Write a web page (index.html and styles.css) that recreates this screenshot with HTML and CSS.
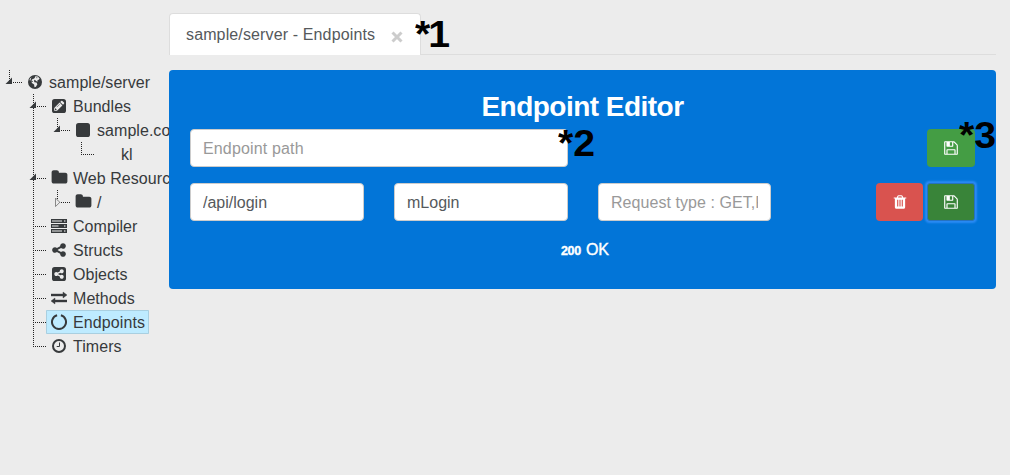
FILE: index.html
```html
<!DOCTYPE html>
<html lang="en">
<head>
<meta charset="utf-8">
<title>sample/server - Endpoints</title>
<link rel="stylesheet" href="styles.css">
</head>
<body>
<svg class="defs" width="0" height="0">
  <symbol id="save" viewBox="0 0 1792 1792"><path d="M512 1536h768v-384h-768v384zm896 0h128v-896q0-14-10-38.5t-20-34.5l-281-281q-10-10-34-20t-39-10v416q0 40-28 68t-68 28h-576q-40 0-68-28t-28-68v-416h-128v1280h128v-416q0-40 28-68t68-28h832q40 0 68 28t28 68v416zm-384-928v-320q0-13-9.5-22.5t-22.5-9.5h-192q-13 0-22.5 9.5t-9.5 22.5v320q0 13 9.5 22.5t22.5 9.5h192q13 0 22.5-9.5t9.5-22.5zm640 32v928q0 40-28 68t-68 28h-1344q-40 0-68-28t-28-68v-1344q0-40 28-68t68-28h928q40 0 88 20t76 48l280 280q28 28 48 76t20 88z"/></symbol>
  <symbol id="folder" viewBox="0 0 1792 1792"><path d="M1728 608v704q0 92-66 158t-158 66h-1216q-92 0-158-66t-66-158v-960q0-92 66-158t158-66h320q92 0 158 66t66 158v32h672q92 0 158 66t66 158z"/></symbol>
  <symbol id="share" viewBox="0 0 1792 1792"><path d="M1344 1024q133 0 226.5 93.5t93.5 226.5-93.5 226.5-226.5 93.5-226.5-93.5-93.5-226.5q0-12 2-34l-360-180q-92 86-218 86-133 0-226.5-93.5t-93.5-226.5 93.5-226.5 226.5-93.5q126 0 218 86l360-180q-2-22-2-34 0-133 93.5-226.5t226.5-93.5 226.5 93.5 93.5 226.5-93.5 226.5-226.5 93.5q-126 0-218-86l-360 180q2 22 2 34t-2 34l360 180q92-86 218-86z"/></symbol>
  <symbol id="open" viewBox="0 0 24 24"><path d="M14 7.5V14H7.5z"/></symbol>
  <symbol id="closed" viewBox="0 0 24 24"><path d="M9.5 8v8.6l4.3-4.3z" fill="#ececec" stroke="#888" stroke-width="1"/></symbol>
</svg>
<div class="app">
  <nav class="sidebar">
    <ul class="tree">
      <li class="node last">
        <div class="row"><svg class="toggle"><use href="#open"/></svg><a class="item"><svg class="icon" viewBox="0 0 16 16"><circle cx="8" cy="8" r="7"/><path class="cut" d="M8.6 2.2l2.2.4 1.8 1.8-.8 1.4-1.4.2.4 1.4-1.4-.2-1.6-1.4-.9 1 .6 1.4 2 .3.9 1.8-1.5 2.5-1.4.5-.4-2.7-2.2-1.7-.5-1.7-2-1.3.9-1.7 1.7-.9 1.7.3 1.1-.8z"/><path d="M4.6 2.6l3-.5.6.9-1 1.5-1.9.7-.9 1.3 1.6.7-.6.9-2.2-1zM9.6 3.2l1 .5-.5.6-1-.3z"/></svg><span>sample/server</span></a></div>
        <ul>
          <li class="node">
            <div class="row"><svg class="toggle"><use href="#open"/></svg><a class="item"><svg class="icon" viewBox="0 0 16 16"><rect x="1" y="1" width="14" height="14" rx="2.6"/><path class="cut" d="M3.2 10l5.4-5.4 2.8 2.8L6 12.8H3.2zM9.2 4l1-1q.6-.5 1.2 0L13 4.6q.5.6 0 1.2l-1 1z"/><path d="M4 10.8l.5-.5 1.2 1.2-.5.5H4zM8.6 6l.3.3-3 3-.3-.3z"/></svg><span>Bundles</span></a></div>
            <ul>
              <li class="node last">
                <div class="row"><svg class="toggle"><use href="#open"/></svg><a class="item"><svg class="icon" viewBox="0 0 16 16"><rect x="1" y="1" width="14" height="14" rx="2.6"/></svg><span>sample.com</span></a></div>
                <ul>
                  <li class="node last"><div class="row"><svg class="toggle"></svg><a class="item"><svg class="icon"></svg><span>kl</span></a></div></li>
                </ul>
              </li>
            </ul>
          </li>
          <li class="node">
            <div class="row"><svg class="toggle"><use href="#open"/></svg><a class="item"><svg class="icon folder"><use href="#folder"/></svg><span>Web Resources</span></a></div>
            <ul>
              <li class="node last"><div class="row"><svg class="toggle"><use href="#closed"/></svg><a class="item"><svg class="icon folder"><use href="#folder"/></svg><span>/</span></a></div></li>
            </ul>
          </li>
          <li class="node"><div class="row"><svg class="toggle"></svg><a class="item"><svg class="icon" viewBox="0 0 16 16"><path d="M0 1h16v4H0zM0 6h16v4H0zM0 11h16v4H0z"/><path class="cut" d="M1 2.5h10v1H1zM1 7.5h6.5v1H1zM1 12.5h10v1H1z"/><circle class="cut" cx="13.8" cy="3" r=".8"/><circle class="cut" cx="13.8" cy="8" r=".8"/><circle class="cut" cx="13.8" cy="13" r=".8"/></svg><span>Compiler</span></a></div></li>
          <li class="node"><div class="row"><svg class="toggle"></svg><a class="item"><svg class="icon"><use href="#share"/></svg><span>Structs</span></a></div></li>
          <li class="node"><div class="row"><svg class="toggle"></svg><a class="item"><svg class="icon" viewBox="0 0 16 16"><rect x="1" y="1" width="14" height="14" rx="2.6"/><g class="cut"><use href="#share" x="2.5" y="2.5" width="11" height="11"/></g></svg><span>Objects</span></a></div></li>
          <li class="node"><div class="row"><svg class="toggle"></svg><a class="item"><svg class="icon" viewBox="0 0 16 16"><path d="M0 4h12V2l4 3-4 3V6H0zM16 10H4V8l-4 3 4 3v-2h12z" stroke="currentColor" stroke-width=".4"/></svg><span>Methods</span></a></div></li>
          <li class="node"><div class="row"><svg class="toggle"></svg><a class="item selected"><svg class="icon" viewBox="0 0 16 16"><path d="M9.9 1.2a7 7 0 1 1-3.8 0" fill="none" stroke="currentColor" stroke-width="2"/></svg><span>Endpoints</span></a></div></li>
          <li class="node last"><div class="row"><svg class="toggle"></svg><a class="item"><svg class="icon" viewBox="0 0 16 16"><circle cx="8" cy="8" r="6" fill="none" stroke="currentColor" stroke-width="2"/><path d="M8.5 4.5v4H5.7" fill="none" stroke="currentColor"/></svg><span>Timers</span></a></div></li>
        </ul>
      </li>
    </ul>
  </nav>
  <main class="main">
    <div class="tabs">
      <div class="tab"><span>sample/server - Endpoints</span><svg class="close" viewBox="0 0 12 12"><path d="M1.5 1.5l9 9M10.5 1.5l-9 9"/></svg></div>
    </div>
    <section class="panel">
      <h1>Endpoint Editor</h1>
      <div class="form-row">
        <input class="field wide" placeholder="Endpoint path">
        <div class="actions"><button class="btn save"><svg><use href="#save"/></svg></button></div>
      </div>
      <div class="form-row">
        <input class="field" value="/api/login">
        <input class="field" value="mLogin">
        <input class="field type" placeholder="Request type : GET,POST">
        <div class="actions">
          <button class="btn remove"><svg viewBox="0 0 1792 1792"><path d="M704 1376v-704q0-14-9-23t-23-9h-64q-14 0-23 9t-9 23v704q0 14 9 23t23 9h64q14 0 23-9t9-23zm256 0v-704q0-14-9-23t-23-9h-64q-14 0-23 9t-9 23v704q0 14 9 23t23 9h64q14 0 23-9t9-23zm256 0v-704q0-14-9-23t-23-9h-64q-14 0-23 9t-9 23v704q0 14 9 23t23 9h64q14 0 23-9t9-23zm-544-992h448l-48-117q-7-9-17-11h-317q-10 2-17 11zm928 32v64q0 14-9 23t-23 9h-96v948q0 83-47 143.5t-113 60.5h-832q-66 0-113-58.5t-47-141.5v-952h-96q-14 0-23-9t-9-23v-64q0-14 9-23t23-9h309l70-167q15-37 54-63t79-26h320q40 0 79 26t54 63l70 167h309q14 0 23 9t9 23z"/></svg></button>
          <button class="btn save focused"><svg><use href="#save"/></svg></button>
        </div>
      </div>
      <p class="status"><b>200</b><span>OK</span></p>
    </section>
  </main>
</div>
<div class="note note-1">*1</div>
<div class="note note-2">*2</div>
<div class="note note-3">*3</div>
</body>
</html>
```
FILE: styles.css
```css
* { box-sizing: border-box; }
body {
  margin: 0;
  height: 475px;
  overflow: hidden;
  background: #ececec;
  color: #373a3c;
  font: 16px/24px "Liberation Sans", Arial, sans-serif;
}
.defs { position: absolute; }
.app { display: flex; height: 475px; }
.sidebar { width: 169px; flex: none; overflow: hidden; padding-top: 70px; }
.tree, .tree ul { margin: 0; padding: 0; list-style: none; }
.tree { margin-left: -2px; width: 240px; }
.node {
  background: repeating-linear-gradient(#222 0 1px, transparent 1px 2px) 11px 0 / 1px 100% no-repeat;
}
.node.last { background-size: 1px 13px; }
.node > ul { margin-left: 24px; }
.row {
  display: flex;
  height: 24px;
  background: repeating-linear-gradient(90deg, #222 0 1px, transparent 1px 2px) 11px 12px / 13px 1px no-repeat;
}
.toggle { width: 24px; height: 24px; flex: none; fill: #373a3c; }
.item {
  display: flex;
  align-items: center;
  height: 24px;
  padding-right: 4px;
  white-space: nowrap;
  letter-spacing: .05px;
}
.item span { padding-top: 2px; }
.icon { width: 16px; height: 16px; margin: -1px 6px 0 5px; fill: currentColor; flex: none; }
.icon.folder { width: 17px; height: 17px; margin: -1px 5px 0 5px; }
.cut { fill: #ececec; }
.item.selected { letter-spacing: .1px; background: #beebff; box-shadow: inset 0 0 0 1px #a9cfe0; border-radius: 1px; }
.main { width: 827px; flex: none; padding-top: 13px; }
.tabs { display: flex; height: 42px; border-bottom: 1px solid #ddd; }
.tab {
  display: flex;
  align-items: center;
  width: 252px;
  height: 42px;
  padding: 0 16px;
  background: #fff;
  border: 1px solid #ddd;
  border-bottom: 0;
  border-radius: 4px 4px 0 0;
  color: #55595c;
  letter-spacing: .13px;
}
.close { width: 12px; height: 12px; margin: 5px 0 0 16px; stroke: #ccc; stroke-width: 3; }
.panel {
  height: 219px;
  margin-top: 15px;
  padding: 20px 21px 0;
  background: #0275d8;
  border-radius: 4px;
  color: #fff;
}
.panel h1 {
  margin: 0 0 5px;
  font-size: 28px;
  line-height: 34px;
  letter-spacing: -.52px;
  text-align: center;
}
.form-row { display: flex; gap: 30px; height: 38px; margin-bottom: 16px; }
.field {
  width: 174px;
  height: 38px;
  padding: 8px 12px 6px;
  border: 1px solid #ccc;
  border-radius: 4px;
  background: #fff;
  color: #55595c;
  font: inherit;
}
.field.wide { width: 378px; letter-spacing: .15px; }
.field.type { width: 173px; letter-spacing: .06px; }
.field::placeholder { color: #999; opacity: 1; }
.actions { display: flex; gap: 4px; margin-left: auto; }
.btn {
  display: flex;
  align-items: center;
  justify-content: center;
  width: 48px;
  height: 38px;
  padding: 0;
  border: 0;
  border-radius: 4px;
}
.btn svg { width: 16px; height: 16px; fill: #fff; }
.save { background: #449d44; }
.remove { width: 47px; background: #d9534f; }
.focused { background: #398439; border: 1px solid #2672c0; box-shadow: 0 0 2px 1.5px #2a8bf5; border-radius: 3px; }
.status { display: flex; align-items: baseline; justify-content: center; gap: 5px; margin: 0; padding: 1px 0 0 5px; }
.status b { font-size: 12.5px; letter-spacing: -.3px; -webkit-text-stroke: .4px #fff; }
.status span { -webkit-text-stroke: .4px #fff; }
.note {
  position: absolute;
  color: #000;
  font-size: 37px;
  font-weight: bold;
  line-height: 40px;
  transform: scaleX(1.06);
  transform-origin: 0 0;
}
.note-1 { left: 415px; top: 15px; letter-spacing: -2px; }
.note-2 { left: 558px; top: 124px; }
.note-3 { left: 959px; top: 116px; }
```
